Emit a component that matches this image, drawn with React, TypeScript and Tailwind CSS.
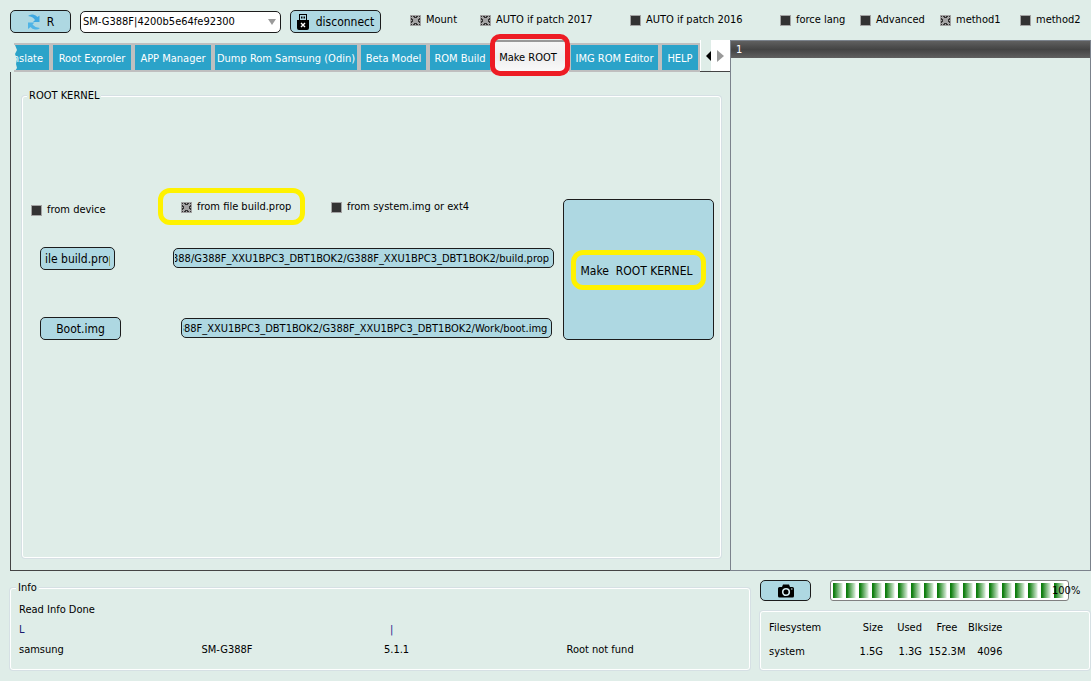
import { useState } from "react";
import type { ReactNode } from "react";

const tabs = [
  { label: "Root Exproler", width: "w-[78px]" },
  { label: "APP Manager", width: "w-[76px]" },
  { label: "Dump Rom Samsung (Odin)", width: "w-[142px]" },
  { label: "Beta Model", width: "w-[65px]" },
  { label: "ROM Build", width: "w-[60px]" },
  { label: "Make ROOT", width: "w-[73px]" },
  { label: "IMG ROM Editor", width: "w-[87px]" },
  { label: "HELP", width: "w-[36px]" },
];

const options = [
  { label: "Mount", on: true, width: "w-[70px]" },
  { label: "AUTO if patch 2017", on: true, width: "w-[150px]" },
  { label: "AUTO if patch 2016", on: false, width: "w-[150px]" },
  { label: "force lang", on: false, width: "w-[80px]" },
  { label: "Advanced", on: false, width: "w-[80px]" },
  { label: "method1", on: true, width: "w-[80px]" },
  { label: "method2", on: false, width: "w-[71px]" },
];

function Check({ label, on }: { label: string; on: boolean }) {
  const [checked, setChecked] = useState(on);
  return (
    <label className="flex items-center gap-[5px] whitespace-nowrap">
      <span className="relative block h-[11px] w-[11px]">
        <input
          type="checkbox"
          checked={checked}
          onChange={() => setChecked(!checked)}
          className="block h-[11px] w-[11px] appearance-none border border-[#a3a3a3] bg-[#333333]"
        />
        {checked && (
          <svg viewBox="0 0 11 11" className="pointer-events-none absolute inset-0" shapeRendering="crispEdges">
            <path d="M1 1h9v9h-9z" fill="#a3a3a3" />
            <path
              d="M3 1h2v1h1v-1h2v1h-1v1h-3v-1h-1zM3 9h1v-1h3v1h1v1h-2v-1h-1v1h-2zM1 3h1v1h1v3h-1v1h-1v-2h1v-1h-1zM9 3h1v2h-1v1h1v2h-1v-1h-1v-3h1zM1 1h1v1h-1zM9 1h1v1h-1zM1 9h1v1h-1zM9 9h1v1h-1z"
              fill="#333333"
            />
          </svg>
        )}
      </span>
      {label}
    </label>
  );
}

function PathField({ label, value, className }: { label: string; value: string; className: string }) {
  return (
    <input
      type="text"
      aria-label={label}
      defaultValue={value}
      // keep the end of the path in view
      ref={(el) => {
        if (el) el.scrollLeft = el.scrollWidth;
      }}
      className={`h-[20px] min-w-0 rounded-[5px] border border-[#1c1c1c] bg-[#aed8e2] pt-px pr-[4px] pl-px text-right ${className}`}
    />
  );
}

function Group({ title, className, children }: { title?: string; className: string; children: ReactNode }) {
  return (
    <fieldset className={`min-w-0 rounded-[3px] border border-white shadow-[0_0_0_1px_#d6e0e4] ${className}`}>
      {title && <legend className="bg-[#dfede8] px-[2px] leading-[16px]">{title}</legend>}
      {children}
    </fieldset>
  );
}

export default function App() {
  const [active, setActive] = useState("Make ROOT");

  return (
    <div className="flex min-h-screen flex-col bg-[#dfede8] font-['DejaVu_Sans_Condensed','DejaVu_Sans',sans-serif] text-[11px] leading-[16px] text-black">
      <header className="flex h-[40px] items-center pt-[3px] pl-[10px]">
        <button className="flex h-[23px] w-[61px] items-center justify-center gap-[6px] rounded-[5px] border border-[#1c1c1c] bg-[#aed8e2] pt-px text-[12px]">
          <svg viewBox="0 0 14 16" className="h-[16px] w-[14px]">
            <path d="M1 2Q3 0 6 0.500Q9 1 10.500 3L12.500 1.500V8H6L8 6Q6 2.500 1 2Z" fill="#3fa9e2" />
            <path d="M13 14Q11 16 8 15.500Q5 15 3.500 13L1 15V8.500H7.500L5.500 10.500Q8 13.500 13 14Z" fill="#4fb4e6" />
          </svg>
          R
        </button>
        <div className="relative ml-[9px] w-[201px]">
          <select
            aria-label="Device"
            className="block h-[22px] w-full appearance-none rounded-[5px] border border-[#1c1c1c] bg-white pl-[2px]"
          >
            <option>SM-G388F|4200b5e64fe92300</option>
          </select>
          <svg viewBox="0 0 8 6" className="pointer-events-none absolute top-[8px] right-[5px] h-[6px] w-[8px]">
            <path d="M0 0h8l-4 6z" fill="#9a9a9a" />
          </svg>
        </div>
        <button className="mr-[29px] ml-[9px] flex h-[23px] w-[91px] items-center justify-center gap-[7px] rounded-[5px] border border-[#1c1c1c] bg-[#aed8e2] pt-px text-[12px]">
          <svg viewBox="0 0 12 16" className="h-[16px] w-[12px]">
            <path d="M2 0h8v6h2v8q0 2-2 2h-8q-2 0-2-2v-8h2z" fill="#000" />
            <path d="M3 1h6v5h-6z" fill="#aed8e2" />
            <path d="M4 2.500h1.500v2h-1.500zM6.500 2.500h1.500v2h-1.500z" fill="#000" />
            <path d="M4 9l4 4M8 9l-4 4" stroke="#fff" strokeWidth="1.400" />
          </svg>
          disconnect
        </button>
        <div className="flex pb-[3px]">
          {options.map((o) => (
            <div key={o.label} className={o.width}>
              <Check label={o.label} on={o.on} />
            </div>
          ))}
        </div>
      </header>

      <main className="grid flex-1 grid-cols-[720fr_361fr] pl-[10px]">
        <section className="flex min-w-0 flex-col">
          <div className="flex h-[32px] items-end">
            <div className="flex min-w-0 flex-1 items-end pl-[4px]">
              <button className="relative h-[29px] w-[37px] overflow-hidden border-y-2 border-r-2 border-[#bfbfbf] bg-[#2ba3c9] text-white">
                <span className="absolute top-[6px] right-[6px]">nslate</span>
                <svg viewBox="0 0 4 26" className="absolute top-0 left-0 h-[26px] w-[4px]">
                  <path d="M0 0h1l2 5-2 4 2 5-1 5 1 4-2 3h-1z" fill="#dfede8" />
                </svg>
              </button>
              {tabs.map((t) =>
                t.label === active ? (
                  <button
                    key={t.label}
                    className="relative h-[32px] w-[77px] border-t-2 border-[#999999] bg-linear-to-b from-[#f6f6f6] via-[#eeeeee] to-[#fafafa] pt-px pr-[5px] whitespace-nowrap"
                  >
                    {t.label}
                    <span className="pointer-events-none absolute -top-[8px] -right-px -bottom-[4px] -left-[2px] z-10 rounded-[10px] border-[5px] border-[#ed1c24]" />
                  </button>
                ) : (
                  <button
                    key={t.label}
                    onClick={() => setActive(t.label)}
                    className={`box-content h-[23px] border-2 border-[#bfbfbf] bg-[#2ba3c9] pt-[2px] whitespace-nowrap text-white ${t.width}`}
                  >
                    {t.label}
                  </button>
                ),
              )}
            </div>
            <div className="flex h-[32px] w-[30px] border-b border-[#444444]">
              <button aria-label="Scroll left" className="flex flex-1 items-center justify-end border-l border-white">
                <svg viewBox="0 0 5 10" className="h-[10px] w-[5px]">
                  <path d="M5 0v10l-5-5z" fill="#000" />
                </svg>
              </button>
              <button aria-label="Scroll right" className="flex w-[19px] items-center justify-center bg-white">
                <svg viewBox="0 0 7 12" className="h-[12px] w-[7px]">
                  <path d="M0 0v12l7-6z" fill="#999999" />
                </svg>
              </button>
            </div>
          </div>

          <div className="flex flex-1 flex-col border-b border-l border-[#444444] pt-[16px] pr-[9px] pb-[12px] pl-[11px]">
            <Group title="ROOT KERNEL" className="flex-1 pr-[6px] pl-[4px]">
              <div className="mt-[95px] flex pl-[3px]">
                <div className="flex min-w-0 flex-1 flex-col">
                  <div className="flex h-[16px] items-center pl-px">
                    <div className="w-[150px] pt-[6px]">
                      <Check label="from device" on={false} />
                    </div>
                    <div className="relative w-[150px]">
                      <Check label="from file build.prop" on={true} />
                      <span className="pointer-events-none absolute -top-[11px] -left-[23px] h-[37px] w-[147px] rounded-[12px] border-[5px] border-[#fff200]" />
                    </div>
                    <Check label="from system.img or ext4" on={false} />
                  </div>
                  <div className="mt-[32px] flex items-start pr-[9px] pl-[10px]">
                    <button className="h-[23px] w-[75px] rounded-[5px] border border-[#1c1c1c] bg-[#aed8e2] px-[4px] pt-px text-[12px]">
                      <span className="block overflow-hidden text-left whitespace-nowrap">ile build.prop</span>
                    </button>
                    <PathField
                      label="build.prop path"
                      value="/G388/G388F_XXU1BPC3_DBT1BOK2/G388F_XXU1BPC3_DBT1BOK2/build.prop"
                      className="mt-px ml-[58px] flex-1"
                    />
                  </div>
                  <div className="mt-[47px] flex items-start pr-[11px] pl-[10px]">
                    <button className="h-[23px] w-[81px] rounded-[5px] border border-[#1c1c1c] bg-[#aed8e2] pt-px text-[12px]">
                      Boot.img
                    </button>
                    <PathField
                      label="boot.img path"
                      value="G388F_XXU1BPC3_DBT1BOK2/G388F_XXU1BPC3_DBT1BOK2/Work/boot.img"
                      className="mt-px ml-[60px] flex-1"
                    />
                  </div>
                </div>
                <button className="relative flex h-[141px] w-[151px] items-center justify-center rounded-[5px] border border-[#1c1c1c] bg-[#aed8e2] pt-[2px] pr-[4px] text-[12px] whitespace-pre">
                  {"Make  ROOT KERNEL"}
                  <span className="pointer-events-none absolute top-[50px] left-[7px] h-[40px] w-[135px] rounded-[12px] border-[5px] border-[#fff200]" />
                </button>
              </div>
            </Group>
          </div>
        </section>

        <section className="border border-[#7b828c]">
          <table className="w-full">
            <thead>
              <tr>
                <th className="h-[17px] bg-linear-to-b from-[#606060] via-[#444444] to-[#606060] pt-px pl-[5px] text-left font-normal text-white">
                  1
                </th>
              </tr>
            </thead>
          </table>
        </section>
      </main>

      <footer className="grid grid-cols-[740fr_330fr] gap-[10px] pt-[9px] pr-px pb-[11px] pl-[10px]">
        <Group title="Info" className="h-[90px] pl-[5px]">
          <div className="grid grid-cols-4 gap-y-[4px] pt-[6px] pl-[3px]">
            <span className="col-span-4">Read Info Done</span>
            <span className="col-span-2 text-[#1a1a6e]">L</span>
            <span className="col-span-2 pl-[6px] text-[#1a1a8e]">|</span>
            <span>samsung</span>
            <span>SM-G388F</span>
            <span>5.1.1</span>
            <span>Root not fund</span>
          </div>
        </Group>

        <div className="flex flex-col justify-between">
          <div className="flex items-center">
            <button
              aria-label="Screenshot"
              className="flex h-[21px] w-[51px] items-center justify-center rounded-[5px] border border-[#1c1c1c] bg-[#aed8e2]"
            >
              <svg viewBox="0 0 16 14" className="h-[14px] w-[16px]">
                <path d="M5 0.500h6l1 2.500h2.500q1.500 0 1.500 1.500v7.500q0 1.500-1.500 1.500h-13q-1.500 0-1.500-1.500v-7.500q0-1.500 1.500-1.500h2.500z" fill="#000" />
                <circle cx="8" cy="8" r="3.300" fill="none" stroke="#d7edf2" strokeWidth="1.600" />
                <path d="M13 4.500h1.500v1h-1.500z" fill="#d7edf2" />
              </svg>
            </button>
            <div
              role="progressbar"
              aria-label="Progress"
              aria-valuenow={100}
              className="relative ml-[19px] h-[21px] w-[239px] rounded-[3px] border border-[#808080] bg-white p-[2px]"
            >
              <div className="h-full w-full bg-[repeating-linear-gradient(90deg,#0c7c0c_0px,#0c7c0c_1px,#d4e9d4_9px,#ffffff_10px,#ffffff_13px)]" />
              <span className="absolute top-[2px] left-[221px]">100%</span>
            </div>
          </div>
          <Group className="h-[59px] pt-[8px] pl-[8px]">
            <table>
              <thead>
                <tr className="h-[16px] [&>th]:p-0 [&>th]:font-normal">
                  <th className="w-[60px] text-left">Filesystem</th>
                  <th className="w-[54px] text-right">Size</th>
                  <th className="w-[39px] text-right">Used</th>
                  <th className="w-[46px] pl-[4px]! text-center">Free</th>
                  <th className="w-[30px] text-right">Blksize</th>
                </tr>
              </thead>
              <tbody>
                <tr className="[&>td]:p-0 [&>td]:pt-[8px]">
                  <td>system</td>
                  <td className="text-right">1.5G</td>
                  <td className="text-right">1.3G</td>
                  <td className="pl-[4px]! text-center">152.3M</td>
                  <td className="text-right">4096</td>
                </tr>
              </tbody>
            </table>
          </Group>
        </div>
      </footer>
    </div>
  );
}
